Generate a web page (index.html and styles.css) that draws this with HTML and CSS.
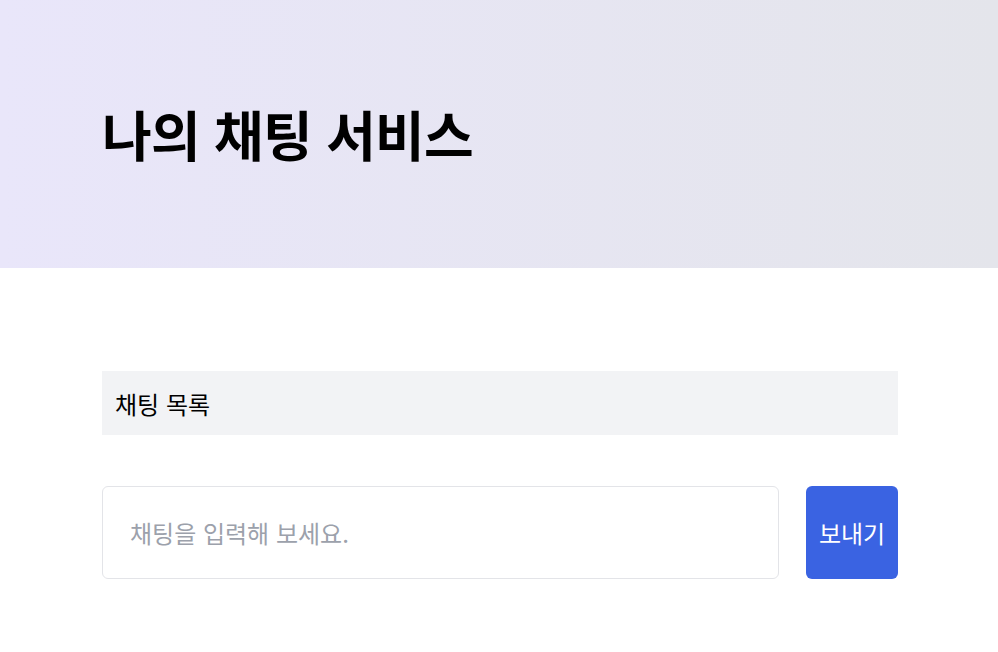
FILE: index.html
```html
<!DOCTYPE html>
<html lang="ko">
<head>
<meta charset="utf-8">
<title>나의 채팅 서비스</title>
<link rel="stylesheet" href="styles.css">
</head>
<body>
<header class="hero">
  <div class="container">
    <h1 class="title">나의 채팅 서비스</h1>
  </div>
</header>
<main class="container main">
  <section class="chat-list">
    <h2 class="chat-list-title">채팅 목록</h2>
  </section>
  <form class="composer">
    <input class="composer-input" type="text" placeholder="채팅을 입력해 보세요.">
    <button class="composer-send" type="button">보내기</button>
  </form>
</main>
</body>
</html>
```
FILE: styles.css
```css
* { box-sizing: border-box; }
html, body { margin: 0; padding: 0; }
body {
  font-family: "Noto Sans CJK KR", "Noto Sans", sans-serif;
  background: #ffffff;
  color: #000;
}
.container {
  padding: 0 100px 0 102px;
}
.hero {
  height: 268px;
  background: linear-gradient(90deg, #e9e6fa 0%, #e4e5eb 100%);
  display: flex;
  align-items: center;
}
.hero .container { flex: 1; }
.title {
  margin: 0;
  font-size: 54px;
  font-weight: 700;
  letter-spacing: -0.8px;
  line-height: 1.2;
}
.main {
  padding-top: 103px;
  display: flex;
  flex-direction: column;
  gap: 51px;
}
.chat-list {
  background: #f2f3f5;
  height: 64px;
  display: flex;
  align-items: center;
  padding: 0 13px;
}
.chat-list-title {
  margin: 0;
  font-size: 24px;
  font-weight: 400;
}
.composer {
  display: flex;
  gap: 27px;
  margin: 0;
}
.composer-input {
  flex: 1;
  min-width: 0;
  height: 93px;
  border: 1px solid #e3e4e8;
  border-radius: 6px;
  padding: 0 27px;
  font-family: inherit;
  font-size: 24px;
  outline: none;
}
.composer-input::placeholder { color: #9ca1ab; }
.composer-send {
  width: 92px;
  height: 93px;
  border: none;
  border-radius: 6px;
  background: #3a63e2;
  color: #fff;
  font-family: inherit;
  font-size: 24px;
  padding: 0;
}
```
